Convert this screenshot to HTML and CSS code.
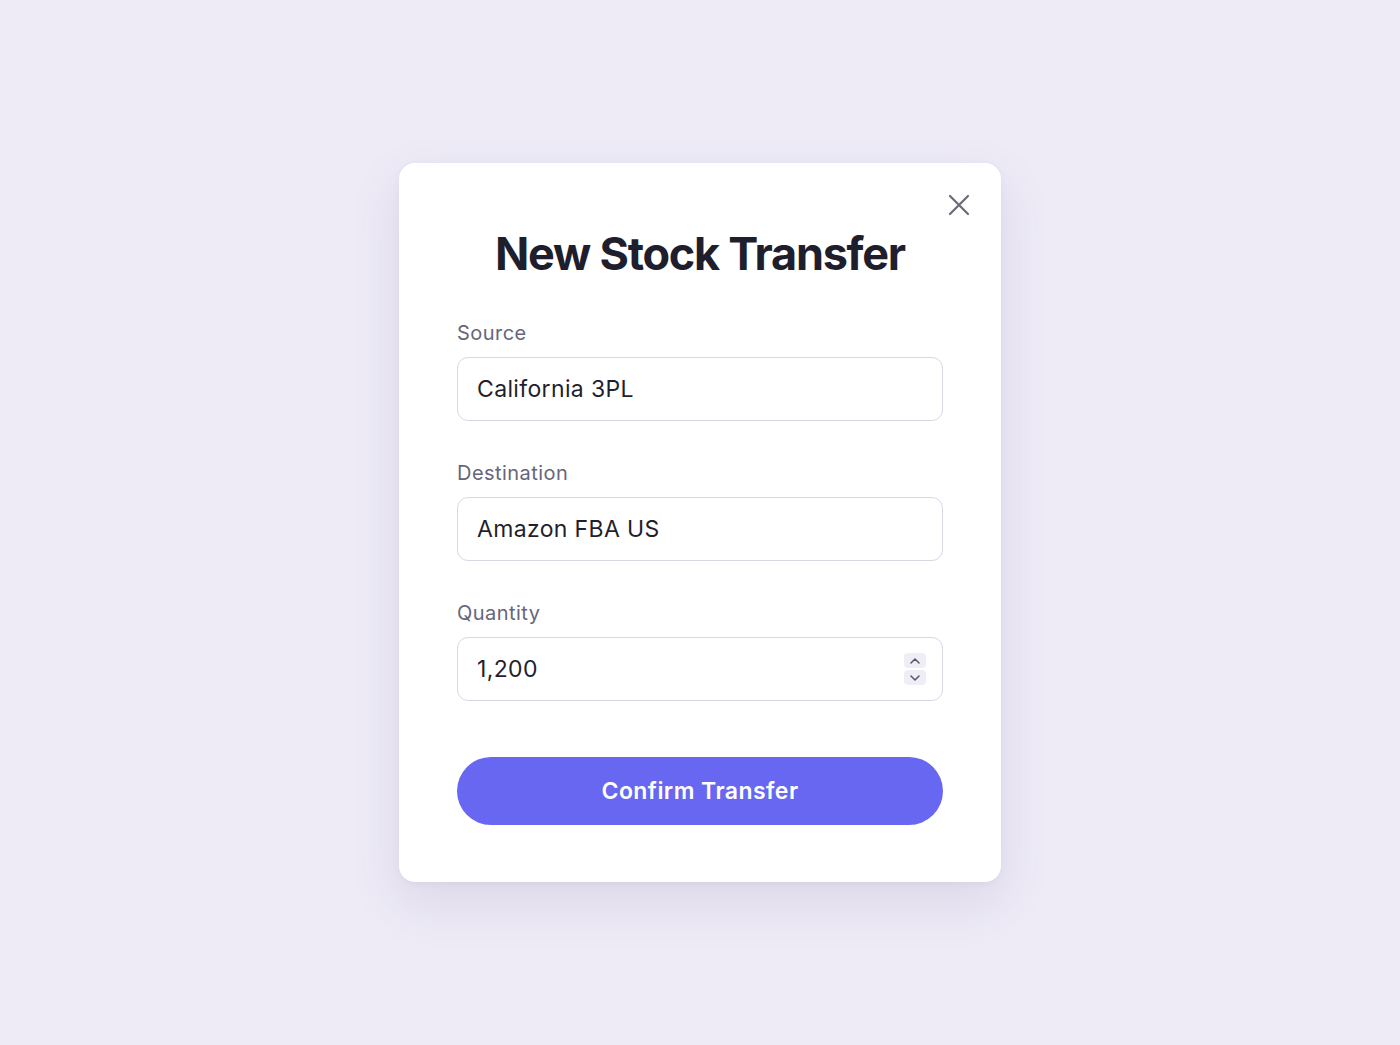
FILE: index.html
```html
<!DOCTYPE html>
<html lang="en">
<head>
<meta charset="utf-8">
<title>New Stock Transfer</title>
<link rel="stylesheet" href="styles.css">
</head>
<body>
<div class="stage">
  <div class="modal">
    <button class="close" aria-label="Close">
      <svg width="22" height="22" viewBox="0 0 22 22"><path d="M2 2 L20 20 M20 2 L2 20" stroke="#6b6b78" stroke-width="2.2" stroke-linecap="round" fill="none"/></svg>
    </button>
    <h1 class="title">New Stock Transfer</h1>
    <div class="field">
      <div class="label">Source</div>
      <div class="input">California 3PL</div>
    </div>
    <div class="field">
      <div class="label">Destination</div>
      <div class="input">Amazon FBA US</div>
    </div>
    <div class="field">
      <div class="label">Quantity</div>
      <div class="input">
        <span>1,200</span>
        <span class="spinner">
          <span class="spin-btn"><svg width="10" height="6" viewBox="0 0 10 6"><path d="M1 5 L5 1 L9 5" stroke="#555566" stroke-width="1.5" fill="none" stroke-linecap="round" stroke-linejoin="round"/></svg></span>
          <span class="spin-btn"><svg width="10" height="6" viewBox="0 0 10 6"><path d="M1 1 L5 5 L9 1" stroke="#555566" stroke-width="1.5" fill="none" stroke-linecap="round" stroke-linejoin="round"/></svg></span>
        </span>
      </div>
    </div>
    <button class="confirm">Confirm Transfer</button>
  </div>
</div>
</body>
</html>
```

FILE: styles.css
```css
* { box-sizing: border-box; }
html, body {
  margin: 0;
  padding: 0;
  height: 100%;
}
body {
  background: #eeebf7;
  font-family: Inter, "Noto Sans", "Liberation Sans", sans-serif;
}
.stage {
  width: 1400px;
  height: 1045px;
  display: flex;
  justify-content: center;
  padding-top: 163px;
}
.modal {
  position: relative;
  width: 602px;
  height: 719px;
  background: #ffffff;
  border-radius: 16px;
  box-shadow: 0 20px 50px rgba(90, 80, 130, 0.13), 0 2px 6px rgba(90, 80, 130, 0.06);
  padding: 67px 58px 0 58px;
  display: flex;
  flex-direction: column;
}
.close {
  position: absolute;
  top: 31px;
  right: 31px;
  width: 22px;
  height: 22px;
  padding: 0;
  border: none;
  background: none;
  display: flex;
}
.title {
  margin: 0;
  font-size: 45px;
  line-height: 48px;
  font-weight: 700;
  color: #1e1e2c;
  text-align: center;
  letter-spacing: -1.25px;
}
.field {
  display: flex;
  flex-direction: column;
  gap: 12px;
  margin-top: 40px;
}
.field:first-of-type {
  margin-top: 43px;
}
.label {
  font-size: 20px;
  line-height: 24px;
  color: #66667a;
  letter-spacing: 0.45px;
}
.input {
  height: 64px;
  border: 1.5px solid #d9d7e3;
  border-radius: 11px;
  padding: 0 16px 0 19px;
  display: flex;
  align-items: center;
  justify-content: space-between;
  font-size: 23px;
  color: #1f1f2d;
  letter-spacing: 0.35px;
}
.spinner {
  display: flex;
  flex-direction: column;
  gap: 2px;
}
.spin-btn {
  width: 22px;
  height: 15px;
  background: #efeef6;
  border-radius: 4px;
  display: flex;
  align-items: center;
  justify-content: center;
}
.confirm {
  margin-top: 56px;
  height: 68px;
  border: none;
  border-radius: 34px;
  background: #6767f1;
  color: #ffffff;
  font-family: Inter, "Noto Sans", "Liberation Sans", sans-serif;
  font-size: 23px;
  font-weight: 600;
  letter-spacing: 0.45px;
}
```
